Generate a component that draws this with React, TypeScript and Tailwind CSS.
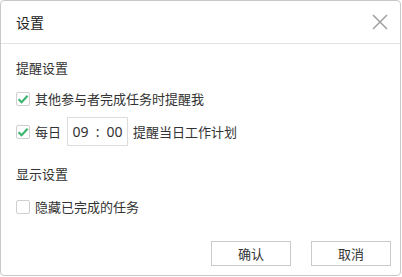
import React, { useState } from 'react';

const font = { fontFamily: '"Noto Sans CJK SC", "Noto Sans", sans-serif' };

function Checkbox({ checked, onChange }: { checked: boolean; onChange: () => void }) {
  return (
    <span
      onClick={onChange}
      className="flex h-[14px] w-[14px] shrink-0 cursor-pointer items-center justify-center rounded-[2px] border border-[#cfcfcf] bg-white"
    >
      {checked && (
        <svg width="12" height="12" viewBox="0 0 12 12">
          <path d="M1.6 6.2 L4.6 9.2 L10.6 2.8" fill="none" stroke="#3cb66e" strokeWidth="2.2" />
        </svg>
      )}
    </span>
  );
}

export default function App() {
  const [notifyDone, setNotifyDone] = useState(true);
  const [daily, setDaily] = useState(true);
  const [hideDone, setHideDone] = useState(false);

  return (
    <div className="h-[277px] w-[402px] bg-white text-[13px] text-[#333]" style={font}>
      <div className="flex h-[276px] w-[401px] flex-col rounded-[4px] border border-[#c8c8c8]">
        <div className="flex h-[43px] shrink-0 items-center justify-between border-b border-[#e3e3e3] pl-[15px] pr-[11px]">
          <span className="text-[14px] text-[#222]">设置</span>
          <svg width="18" height="18" viewBox="0 0 18 18">
            <path d="M2 2 L16 16 M16 2 L2 16" stroke="#a0a0a0" strokeWidth="1.5" />
          </svg>
        </div>

        <div className="flex flex-1 flex-col px-[15px]">
          <div className="mt-[14px] h-[20px] leading-[20px]">提醒设置</div>

          <div className="mt-[11px] flex h-[20px] items-center gap-[5px] leading-[20px]">
            <Checkbox checked={notifyDone} onChange={() => setNotifyDone(!notifyDone)} />
            <span>其他参与者完成任务时提醒我</span>
          </div>

          <div className="mt-[8px] flex h-[29px] items-center leading-[20px]">
            <Checkbox checked={daily} onChange={() => setDaily(!daily)} />
            <span className="ml-[5px]">每日</span>
            <div
              className="ml-[6px] flex h-[29px] w-[61px] items-center justify-center gap-[7px] border border-[#dcdcdc] text-[14px] text-[#333]"
              style={{ fontFamily: '"Noto Sans", sans-serif' }}
            >
              <span>09</span>
              <span>:</span>
              <span>00</span>
            </div>
            <span className="ml-[5px]">提醒当日工作计划</span>
          </div>

          <div className="mt-[18px] h-[20px] leading-[20px]">显示设置</div>

          <div className="mt-[13px] flex h-[20px] items-center gap-[5px] leading-[20px]">
            <Checkbox checked={hideDone} onChange={() => setHideDone(!hideDone)} />
            <span>隐藏已完成的任务</span>
          </div>

          <div className="mt-[24px] flex justify-end gap-[20px]">
            <button className="h-[25px] w-[80px] border border-[#cacaca] bg-white text-[13px] text-[#333]">确认</button>
            <button className="mr-[-6px] h-[25px] w-[80px] border border-[#cacaca] bg-white text-[13px] text-[#333]">取消</button>
          </div>
        </div>
      </div>
    </div>
  );
}
